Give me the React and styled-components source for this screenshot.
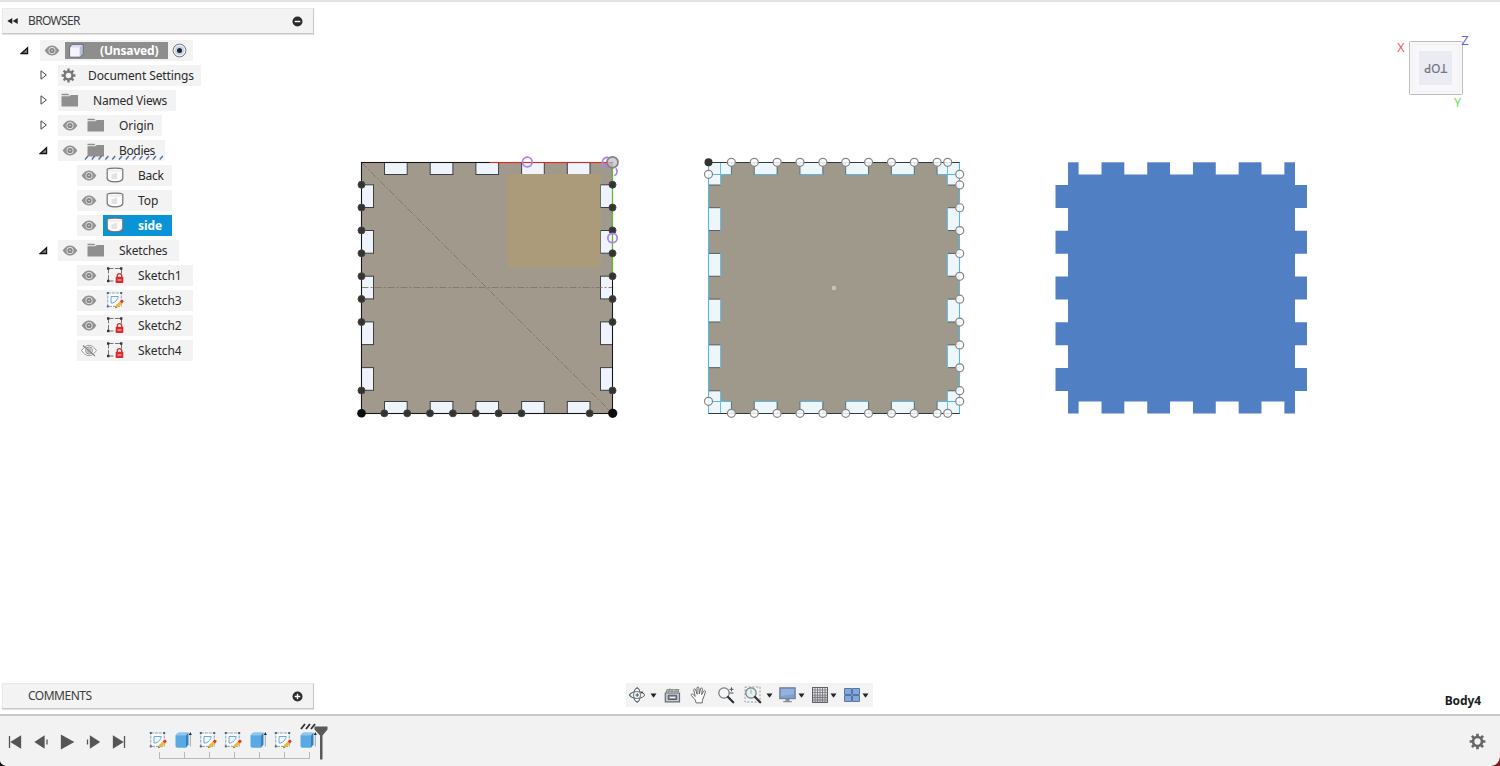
import React from "react";
import styled, { createGlobalStyle, css } from "styled-components";

const Global = createGlobalStyle`
  * { box-sizing: border-box; }
  html, body { margin: 0; padding: 0; overflow: hidden; background: #fff; }
  body { font-family: "Noto Sans", "Open Sans", sans-serif; color: #2b2b2b; }
  svg { display: block; flex: none; }
`;

/* ---------- layout ---------- */
const Shell = styled.div`
  width: 1500px;
  height: 766px;
  display: flex;
  flex-direction: column;
`;
const Workspace = styled.main`
  flex: 1;
  display: grid;
  border-top: 2px solid #e3e3e6;
`;
const Scene = styled.svg`
  grid-area: 1 / 1;
`;
const Overlay = styled.div`
  grid-area: 1 / 1;
  z-index: 1;
  display: flex;
  flex-direction: column;
  justify-content: space-between;
`;
const TopArea = styled.div`
  display: flex;
  justify-content: space-between;
  padding: 6px 26px 0 2px;
`;
const BottomArea = styled.div`
  display: flex;
  align-items: flex-start;
  height: 31px;
  padding-left: 2px;
`;

/* ---------- palettes ---------- */
const Palette = styled.section`
  width: 312px;
`;
const PaletteHeader = styled.header`
  display: flex;
  align-items: center;
  width: 312px;
  height: 26px;
  padding: 0 10px 0 ${(p) => (p.$arrow ? 4 : 25)}px;
  background: #f3f3f3;
  border: 1px solid #e9e9e9;
  border-right-color: #c9c9c9;
  border-bottom-color: #c6c6c6;
  box-shadow: 0 1px 1px #e4e4e4;
`;
const PaletteTitle = styled.h2`
  margin: 0 auto 0 ${(p) => (p.$arrow ? 10 : 0)}px;
  font-size: 12px;
  font-weight: 400;
  line-height: 20px;
  letter-spacing: ${(p) => p.$track || 0}px;
  color: #3c3c3c;
`;
const Tree = styled.ul`
  list-style: none;
  margin: 6px 0 0;
  padding: 0;
  display: flex;
  flex-direction: column;
  gap: 5px;
`;
const Row = styled.li`
  display: flex;
  align-items: center;
  height: 20px;
  padding-left: ${(p) => p.$indent}px;
`;
const Twisty = styled.span`
  width: ${(p) => p.$w}px;
  display: flex;
`;
const Cell = styled.div`
  position: relative;
  display: flex;
  align-items: center;
  width: ${(p) => p.$w}px;
  height: 21px;
  padding-left: ${(p) => p.$pad ?? 4}px;
  background: #f3f3f3;
`;
const Chip = styled.div`
  display: flex;
  align-items: center;
  height: 20px;
  margin-left: 6px;
  padding-left: 3px;
  ${(p) =>
    p.$tone === "root" &&
    css`
      width: 103px;
      height: 17px;
      margin-left: 5px;
      background: #8e8e8e;
      color: #fff;
      font-weight: 700;
    `}
  ${(p) =>
    p.$tone === "selected" &&
    css`
      width: 69px;
      height: 21px;
      background: #0a94d8;
      color: #fff;
      font-weight: 700;
    `}
`;
const Label = styled.span`
  margin-left: ${(p) => p.$ml ?? 15}px;
  padding-top: 1px;
  font-size: 12px;
  line-height: 18px;
  letter-spacing: ${(p) => p.$track ?? -0.08}px;
  white-space: nowrap;
`;
const RadioSlot = styled.span`
  margin-left: 4px;
`;
const Hatch = styled.svg`
  position: absolute;
  left: 26px;
  bottom: 1px;
`;

/* ---------- view cube ---------- */
const CubeWrap = styled.svg`
  margin-top: 22px;
`;

/* ---------- navigation bar ---------- */
const NavBar = styled.nav`
  display: flex;
  align-items: center;
  width: 247px;
  height: 24px;
  margin-left: 312px;
  padding-left: 2px;
  background: #f3f3f3;
`;
const NavItem = styled.span`
  display: flex;
  align-items: center;
  gap: ${(p) => p.$gap ?? 4}px;
  width: ${(p) => p.$w}px;
`;
const Status = styled.strong`
  margin: 9px 0 0 auto;
  padding-right: 19px;
  font-size: 12px;
  line-height: 18px;
  letter-spacing: -0.1px;
  color: #1d1d1d;
`;

/* ---------- timeline ---------- */
const Timeline = styled.footer`
  position: relative;
  display: flex;
  height: 52px;
  border-top: 2px solid #c9c9c9;
  background: #f2f2f2;
`;
const Player = styled.div`
  display: flex;
  align-items: center;
  height: 52px;
  padding-left: 7px;
`;
const PlayBtn = styled.span`
  width: 26px;
  display: flex;
`;
const Features = styled.div`
  display: flex;
  padding: 15px 0 0 12px;
`;
const Feature = styled.div`
  width: 25px;
  height: 28px;
  display: flex;
  flex-direction: column;
  justify-content: space-between;
`;
const Tick = styled.i`
  height: 7px;
  margin-left: 10px;
  margin-right: -10px;
  border-left: 1px solid #b8b8b8;
  border-bottom: ${(p) => (p.$last ? 0 : 1)}px solid #b8b8b8;
`;
const Marker = styled.svg`
  position: absolute;
  left: 298px;
  top: 6px;
`;
const GearBox = styled.span`
  margin: 17px 14px 0 auto;
`;
const Corner = styled.svg`
  position: absolute;
  bottom: 0;
  ${(p) => p.$side}: 0;
`;

/* ---------- icons ---------- */
const Eye = ({ off }) => (
  <svg width="16" height="13" viewBox="0 0 16 13">
    <path d="M.6 6.500C3.200 2.600 5.600 1.400 8 1.400s4.800 1.200 7.400 5.100C12.800 10.400 10.400 11.600 8 11.600S3.200 10.400.6 6.500Z"
      fill={off ? "#f8f8f8" : "#929292"} stroke={off ? "#888" : "none"} strokeWidth=".9" />
    <circle cx="8" cy="6.500" r="3.500" fill={off ? "none" : "#e4e4e4"} stroke={off ? "#888" : "none"} strokeWidth=".9" />
    <circle cx="8" cy="6.500" r="2.600" fill={off ? "#bbb" : "#858585"} />
    {!off && <circle cx="8" cy="6.500" r=".8" fill="#ddd" />}
    {off && <path d="M2 1.500 14 12" stroke="#888" strokeWidth="1.100" />}
  </svg>
);
const Open = () => (
  <svg width="9" height="9" viewBox="0 0 9 9">
    <path d="M7.600 1.500V7.600H1Z" fill="#555" stroke="#111" strokeWidth="1.200" />
    <path d="M6.700 4v2.500H4.200Z" fill="#999" />
  </svg>
);
const Closed = () => (
  <svg width="9" height="10" viewBox="0 0 9 10">
    <path d="M2 .8v8.400L7.400 5Z" fill="#fff" stroke="#444" strokeWidth="1" />
  </svg>
);
const Folder = () => (
  <svg width="18" height="14" viewBox="0 0 18 14">
    <path d="M.5 .7h6.800l1.200 1.500H.5ZM.5 3.200h7.500l2-1.300h7V13.400H.5Z" fill="#8f8f8f" />
  </svg>
);
const Gear = ({ size = 15, color = "#777" }) => (
  <svg width={size} height={size} viewBox="0 0 16 16">
    <g stroke={color} strokeWidth="2.500">
      <path d="M8 .6v3M8 12.400v3M.6 8h3M12.400 8h3M2.750 2.750l2.200 2.200M11.050 11.050l2.200 2.200M2.750 13.250l2.200-2.200M11.050 4.950l2.200-2.200" />
    </g>
    <circle cx="8" cy="8" r="4.200" fill="none" stroke={color} strokeWidth="2.500" />
  </svg>
);
const Root = () => (
  <svg width="17" height="15" viewBox="0 0 17 15">
    <path d="M1.800 4.200 4 1.300H15V11l-2.400 2.900H1.800Z" fill="#d8dcef" stroke="#5d5d68" strokeWidth=".9" />
    <path d="M2.200 4.500h9.500v9H2.200Z" fill="#f4f4fb" />
    <path d="M11.800 4.500 14.500 2v9l-2.700 2.500Z" fill="#b5bddc" />
  </svg>
);
const Radio = () => (
  <svg width="15" height="15" viewBox="0 0 15 15">
    <circle cx="7.500" cy="7.500" r="6.400" fill="#eef1f5" stroke="#777" />
    <circle cx="7.500" cy="7.500" r="4.600" fill="#c3d2e4" />
    <circle cx="7.500" cy="7.500" r="2.500" fill="#1c2436" />
  </svg>
);
const Body = () => (
  <svg width="18" height="16" viewBox="0 0 18 16">
    <path d="M1.200 2.300C3.500.7 14.500.7 16.800 2.300V11.500C16.300 13.400 14.500 14.800 9 14.800S1.700 13.400 1.200 11.500Z" fill="#fbfbfb" stroke="#747474" strokeWidth="1.200" />
    <path d="M1.800 3c3 1.400 11.400 1.400 14.400 0" fill="none" stroke="#dcdcdc" strokeWidth=".8" />
    <path d="M5.500 7.500 11 5.500v6.500H5.500Z" fill="#e3e3e3" />
  </svg>
);
const SketchLocked = () => (
  <svg width="18" height="18" viewBox="0 0 18 18">
    <path d="M2.500 2.500h13M2.500 2.500v12.500M15.500 2.500v7M2.500 15h7" fill="none" stroke="#777" strokeWidth="1" strokeDasharray="5 1.500" />
    <g fill="#333">
      <rect x="1" y="1.300" width="2.400" height="2.400" />
      <rect x="14" y="1.300" width="2.400" height="2.400" />
      <rect x="1" y="13.800" width="2.400" height="2.400" />
    </g>
    <path d="M11.300 11V9.800a2.200 2.200 0 0 1 4.400 0V11" fill="none" stroke="#cf3434" strokeWidth="1.300" />
    <rect x="9.700" y="10.800" width="7.600" height="6.200" rx=".7" fill="#d32f2f" />
    <path d="M11.500 14h4" stroke="#f3a9a9" strokeWidth="1.200" />
  </svg>
);
const SketchEdit = () => (
  <svg width="18" height="18" viewBox="0 0 18 18">
    <rect x="1.800" y="2" width="13.400" height="13.400" fill="#fbfcff" stroke="#8199ad" strokeWidth=".9" strokeDasharray="3 1" />
    <g fill="#4e6678">
      <rect x=".8" y="1" width="2" height="2" />
      <rect x="14.200" y="1" width="2" height="2" />
      <rect x=".8" y="14.400" width="2" height="2" />
    </g>
    <path d="M5 5.500h7.200c-.2 2.700-2.300 5.500-5.500 6.500H5Z" fill="#f2f8fd" stroke="#6ea6d4" strokeWidth="1" />
    <path d="M9.200 17.200 10 14l4-3.800 2.200 2.200L12 16.300Z" fill="#f2b736" />
    <path d="m13.800 10.200 1.400-1.300q1-.5 1.900.4t.2 1.800l-1.400 1.300Z" fill="#e0382f" />
    <path d="m9.200 17.200.5-1.700 1.200 1.100Z" fill="#725220" />
  </svg>
);
const Extrude = () => (
  <svg width="18" height="18" viewBox="0 0 18 18">
    <path d="M1.500 4.500Q2.500 1.500 5 1.300H14L12 4.500Z" fill="#8fc6ee" />
    <path d="M1.500 4.300H12V16.800H3.500Q1.500 16.800 1.500 15Z" fill="#59a9e3" />
    <path d="M12 4.300 14.500 1.300V13.500L12 16.800Z" fill="#3580be" />
    <path d="M16.300 3.500v12" stroke="#9a9a9a" strokeWidth=".9" />
    <path d="m14.800 4 1.500-3 1.500 3Z" fill="#222" />
  </svg>
);
const Knob = ({ plus }) => (
  <svg width="11" height="11" viewBox="0 0 11 11">
    <circle cx="5.500" cy="5.500" r="5" fill="#2c2c2c" />
    <path d={plus ? "M2.700 5.500h5.600M5.500 2.700v5.600" : "M2.700 5.500h5.600"} stroke="#fff" strokeWidth="1.400" />
  </svg>
);
const Collapse = () => (
  <svg width="11" height="8" viewBox="0 0 11 8">
    <path d="M5.300 1v6L.3 4ZM10.700 1v6l-5-3Z" fill="#222" />
  </svg>
);
const Caret = () => (
  <svg width="7" height="5" viewBox="0 0 7 5"><path d="M.5.5h6L3.500 4.700Z" fill="#222" /></svg>
);

const Orbit = () => (
  <svg width="18" height="18" viewBox="0 0 18 18" fill="none" stroke="#5c666b" strokeWidth="1">
    <ellipse cx="9" cy="9" rx="7.500" ry="3.300" />
    <ellipse cx="9" cy="9" rx="3.300" ry="7" />
    <path d="m7.300 3.500 2-2 2 2M7.300 14.500l2 2 2-2M3.500 7 1.500 9l2 2" />
    <circle cx="9" cy="9" r="2.700" fill="#f8f8f8" stroke="none" />
    <path d="M7.500 9h3.400M9.200 7.300v3.400" stroke="#2b5a6c" />
    <circle cx="14" cy="6.500" r="1" fill="#333" stroke="none" />
  </svg>
);
const LookAt = () => (
  <svg width="17" height="16" viewBox="0 0 17 16">
    <path d="M1.300 6h14.200v8.800H1.300Z" fill="#c9ccd3" stroke="#666b74" strokeWidth="1.200" />
    <path d="M2 5.500 3 2.500M4.500 5.500 6 1.500M8 5.500V2.800M10.500 5.500 13 2.200M13.500 5.500l1.500-3M3 2.700h12M2 4.200h13" stroke="#777" strokeWidth=".9" />
    <path d="M4.200 8.300h8.500v4.200H4.200Z" fill="#8f96a2" stroke="#555b66" />
    <path d="M6 10.400h5" stroke="#fff" />
  </svg>
);
const Hand = () => (
  <svg width="18" height="18" viewBox="0 0 24 24" fill="#fff" stroke="#666" strokeWidth="1.300" strokeLinejoin="round" strokeLinecap="round">
    <path d="M8 22 7 18.500 1.800 12.700c-1-1.700 1-2.700 2.400-1.400L7 14 5 5.500c-.3-2 2-2.300 2.500-.6L9.500 11 9.300 2.800c0-2 2.400-2 2.600 0l.5 7.900 1.700-7c.5-1.800 2.700-1.300 2.400.6l-1 7.200 2.700-4.700c1-1.500 3-.6 2.300 1.200L17.800 16l-1.300 3V22Z" />
  </svg>
);
const Zoom = ({ fit }) => (
  <svg width="18" height="18" viewBox="0 0 18 18">
    {fit && <rect x="1" y="1" width="15" height="15" fill="none" stroke="#8d8d8d" strokeWidth=".9" strokeDasharray="2 1.700" />}
    <circle cx="7" cy="7" r="5.200" fill={fit ? "#e3f0ef" : "#f4f6f7"} stroke="#747b80" strokeWidth="1.200" />
    <path d="m11 11 5.200 5.200" stroke="#333" strokeWidth="2.300" strokeLinecap="round" />
    {fit ? <path d="M7 3.800v4" stroke="#8cb6b3" /> : <path d="M12.500 3.300h4M14.500 1.300v4M12.500 7h4" stroke="#444" strokeWidth=".9" />}
  </svg>
);
const Monitor = () => (
  <svg width="17" height="16" viewBox="0 0 17 16">
    <rect x=".8" y=".8" width="15.400" height="10.900" fill="#7e9fcf" stroke="#66758d" />
    <path d="M2 2h13v5L2 9Z" fill="#94b2dc" />
    <path d="M6.500 12h4v2h2.300v1.300H4.200V14h2.300Z" fill="#888e99" />
  </svg>
);
const GridIcon = () => (
  <svg width="16" height="16" viewBox="0 0 16 16">
    <rect x=".5" y=".5" width="15" height="15" fill="#e5e5ea" stroke="#606067" />
    <path d="M3 1v14M5.500 1v14M8 1v14M10.500 1v14M13 1v14M1 3h14M1 5.500h14M1 8h14M1 10.500h14M1 13h14" stroke="#727279" strokeWidth=".8" />
    <path d="M1 8h14v7H1Z" fill="#666" opacity=".2" />
  </svg>
);
const Panes = () => (
  <svg width="16" height="14" viewBox="0 0 16 14">
    <path d="M.5.5h7v6h-7ZM8.500.5h7v6h-7ZM.5 7.500h7v6h-7ZM8.500 7.500h7v6h-7Z" fill="#83a8db" stroke="#5676a5" strokeWidth="1" />
  </svg>
);

/* ---------- scene drawing ---------- */
const seq = (start, n, step = 22.86) => Array.from({ length: n }, (_, i) => start + i * step);

const Panel1 = () => {
  const dots = [184.700, 207.500, 230.400, 253.300, 276.200, 299, 322, 390.500];
  const bottom = [384.300, 407.200, 430, 452.900, 475.800, 498.600, 521.500, 589.700];
  return (
    <g>
      <rect x="361" y="162" width="252" height="252" fill="#a19a8c" />
      <g fill="#eef3fc" stroke="#394047" strokeWidth="1">
        {seq(384.500, 5, 45.700).map((x) => (
          <React.Fragment key={x}>
            <rect x={x} y="162.500" width="22.700" height="12" />
            <rect x={x} y="401.500" width="22.700" height="12" />
          </React.Fragment>
        ))}
        {seq(184.800, 5, 45.700).map((y) => (
          <React.Fragment key={y}>
            <rect x="361.500" y={y} width="12" height="22.700" />
            <rect x="600.500" y={y} width="12" height="22.700" />
          </React.Fragment>
        ))}
      </g>
      <rect x="508" y="174" width="92.500" height="93.500" fill="#ab9b7b" />
      <path d="M361.500 162.500 612.500 413.500" stroke="#7d766a" strokeWidth=".9" strokeDasharray="7 2 2 2" />
      <path d="M361.500 287.500H612.500" stroke="#7d776c" strokeWidth=".9" strokeDasharray="7 2 2 2" />
      <rect x="361.500" y="162.500" width="251" height="251" fill="none" stroke="#15171b" strokeWidth="1.100" />
      <path d="M490 162.500H612" stroke="#e8261f" strokeWidth="1.100" />
      <path d="M612.500 163V276" stroke="#5cc02a" strokeWidth="1.100" />
      <g fill="#333" stroke="#4a4844" strokeWidth="1">
        {dots.map((y) => (
          <React.Fragment key={y}>
            <circle cx="361.500" cy={y} r="3.500" />
            <circle cx="612.500" cy={y} r="3.500" />
          </React.Fragment>
        ))}
        {bottom.map((x) => <circle key={x} cx={x} cy="413.300" r="3.500" />)}
      </g>
      <circle cx="361.500" cy="413.300" r="4.300" fill="#0c0c0c" />
      <circle cx="612.700" cy="413.300" r="4.600" fill="#0c0c0c" />
      <g fill="none" stroke="#ad80e3" strokeWidth="1.700">
        <circle cx="527.300" cy="162" r="4.800" />
        <path d="M608.500 166.500a4.700 4.700 0 1 1 0-9" />
        <path d="M615.800 168.300a4.500 4.500 0 0 1-1.600 7.400" />
        <circle cx="612.500" cy="238" r="4.700" />
      </g>
      <circle cx="612.500" cy="162.300" r="5.500" fill="#c6bec9" fillOpacity=".75" stroke="#857e89" strokeWidth="1.700" />
    </g>
  );
};

const L = 708.500, R = 959.500, T = 162.500, B = 413.500;
const Panel2 = () => {
  const xs = [...seq(731.400, 10), 947.700];
  const rightY = [174.300, ...seq(184.900, 10), 401.300];
  return (
    <g>
      <rect x="708" y="162" width="252" height="252" fill="#9f998b" />
      <g fill="#edf6fb">
        {[[L, 23], ...seq(754.200, 4, 45.720).map((x) => [x, 22.800]), [937, 22.500]].map(([x, w]) => (
          <React.Fragment key={x}>
            <rect x={x} y={T} width={w} height="12" />
            <rect x={x} y="401.500" width={w} height="12" />
          </React.Fragment>
        ))}
        {[[T, 22.500], ...seq(207.700, 4, 45.720).map((y) => [y, 22.800]), [390.800, 22.700]].map(([y, h]) => (
          <React.Fragment key={y}>
            <rect x={L} y={y} width="12" height={h} />
            <rect x="947.500" y={y} width="12" height={h} />
            <path d={`M${L} ${y}h12M${L} ${y + h}h12M947.500 ${y}h12M947.500 ${y + h}h12`} stroke="#4a555a" strokeWidth=".9" />
          </React.Fragment>
        ))}
      </g>
      {[[L, 23], ...seq(754.200, 4, 45.720).map((x) => [x, 22.800]), [937, 22.500]].map(([x, w]) => (
        <path key={x} d={`M${x} 174.500h${w}M${x} 401.500h${w}`} stroke="#5fb2d8" />
      ))}
      {[[T, 22.500], ...seq(207.700, 4, 45.720).map((y) => [y, 22.800]), [390.800, 22.700]].map(([y, h]) => (
        <path key={y} d={`M720.500 ${y}v${h}M947.500 ${y}v${h}`} stroke="#68bfe6" />
      ))}
      <path
        d={seq(731.400, 10).map((x) => `M${x} 162.500v12M${x} 401.500v12`).join("")}
        stroke="#4d6570" strokeWidth=".9"
      />
      <path d={`M${L} ${T}V${B}M${R} ${T}V${B}`} stroke="#58b5e0" strokeWidth="1.100" />
      <path d={`M${L} ${T}H${R}M${L} ${B}H${R}`} stroke="#33383d" strokeWidth="1.200" />
      <g fill="#fff" fillOpacity=".85" stroke="#858585" strokeWidth="1.200">
        {xs.map((x) => (
          <React.Fragment key={x}>
            <circle cx={x} cy="162.300" r="4" />
            <circle cx={x} cy="413.300" r="4" />
          </React.Fragment>
        ))}
        {rightY.map((y) => <circle key={y} cx="959.700" cy={y} r="4" />)}
        <circle cx="708.500" cy="174.300" r="4" />
        <circle cx="708.500" cy="401.300" r="4" />
      </g>
      <circle cx="708.500" cy="162.300" r="4" fill="#333" />
      <circle cx="834" cy="288" r="3.200" fill="#c5c0b7" stroke="#8d887d" />
    </g>
  );
};

const Panel3 = () => (
  <g>
    <rect x="1068" y="162.300" width="227" height="251.200" fill="#507fc4" />
    <g fill="#507fc4">
      {seq(185, 5, 45.750).map((y) => <rect key={y} x="1055.500" y={y} width="251.500" height="23" />)}
    </g>
    <g fill="#fff">
      {seq(1078.600, 5, 45.720).map((x) => (
        <React.Fragment key={x}>
          <rect x={x} y="160" width="22.900" height="14.500" />
          <rect x={x} y="401.500" width="22.900" height="14" />
        </React.Fragment>
      ))}
    </g>
  </g>
);

/* ---------- tree data ---------- */
const ICONS = { folder: Folder, body: Body, locked: SketchLocked, edit: SketchEdit };
const ROWS = [
  { label: "Origin", level: 1, w: 104, icon: "folder", closed: true },
  { label: "Bodies", level: 1, w: 107, icon: "folder", hatch: true, track: -0.35 },
  { label: "Back", level: 2, w: 95, icon: "body", track: -0.3 },
  { label: "Top", level: 2, w: 95, icon: "body" },
  { label: "side", level: 2, w: 95, icon: "body", selected: true },
  { label: "Sketches", level: 1, w: 121, icon: "folder", track: -0.18 },
  { label: "Sketch1", level: 2, w: 116, icon: "locked" },
  { label: "Sketch3", level: 2, w: 116, icon: "edit" },
  { label: "Sketch2", level: 2, w: 116, icon: "locked" },
  { label: "Sketch4", level: 2, w: 116, icon: "locked", off: true },
];

const TreeRow = ({ label, level, w, icon, closed, hatch, selected, off, track }) => {
  const Icon = ICONS[icon];
  return (
    <Row $indent={level === 1 ? 37 : 75}>
      {level === 1 && <Twisty $w={19}>{closed ? <Closed /> : <Open />}</Twisty>}
      <Cell $w={w}>
        <Eye off={off} />
        <Chip $tone={selected ? "selected" : undefined}>
          <Icon />
          <Label $ml={14} $track={track}>{label}</Label>
        </Chip>
        {hatch && (
          <Hatch width="80" height="5" viewBox="0 0 80 5">
            <path d={seq(1, 12, 6.800).map((x) => `M${x} 4.500l3-3.500`).join("")} stroke="#56719b" strokeWidth="1.400" />
          </Hatch>
        )}
      </Cell>
    </Row>
  );
};

const PLAYER = [
  "M2.500 2v12M13.500 2.500v11L4.500 8Z",
  "M11 2.500v11L2.500 8ZM14 5.500v5",
  "M2.500 1.500v13L14 8Z",
  "M5.500 2.500v11L14 8ZM2.500 5.500v5",
  "M13.500 2v12M2.500 2.500v11L11.500 8Z",
];
const FEATURES = ["s", "e", "s", "s", "e", "s", "e"];

export default function App() {
  return (
    <Shell>
      <Global />
      <Workspace>
        <Scene width="1500" height="712" viewBox="0 2 1500 712">
          <Panel1 />
          <Panel2 />
          <Panel3 />
        </Scene>
        <Overlay>
          <TopArea>
            <Palette>
              <PaletteHeader $arrow>
                <Collapse />
                <PaletteTitle $arrow $track={-0.65}>BROWSER</PaletteTitle>
                <Knob />
              </PaletteHeader>
              <Tree>
                <Row $indent={18}>
                  <Twisty $w={20}><Open /></Twisty>
                  <Cell $w={153}>
                    <Eye />
                    <Chip $tone="root">
                      <Root />
                      <Label $ml={15} $track={-0.15}>(Unsaved)</Label>
                    </Chip>
                    <RadioSlot><Radio /></RadioSlot>
                  </Cell>
                </Row>
                <Row $indent={37}>
                  <Twisty $w={19}><Closed /></Twisty>
                  <Cell $w={143} $pad={3}>
                    <Gear />
                    <Label $ml={12} $track={-0.1}>Document Settings</Label>
                  </Cell>
                </Row>
                <Row $indent={37}>
                  <Twisty $w={19}><Closed /></Twisty>
                  <Cell $w={118} $pad={3}>
                    <Folder />
                    <Label $ml={14} $track={-0.22}>Named Views</Label>
                  </Cell>
                </Row>
                {ROWS.map((r) => <TreeRow key={r.label} {...r} />)}
              </Tree>
            </Palette>
            <CubeWrap width="84" height="84" viewBox="1390 30 84 84">
              <rect x="1409.500" y="41.500" width="53" height="53" rx="1" fill="#f8f8fa" stroke="#bdbdbf" />
              <rect x="1412.500" y="44.500" width="47" height="47" fill="#f8f8fa" stroke="#efeff1" />
              <rect x="1419" y="51" width="33" height="34" fill="#ebebf3" />
              <g fontFamily="Noto Sans, sans-serif" textAnchor="middle">
                <text x="1435.500" y="73" fontSize="12" fontWeight="500" fill="#77777e" transform="rotate(180 1435.500 68.500)">TOP</text>
                <text x="1401" y="51.500" fontSize="12.500" fill="#f0585c">X</text>
                <text x="1465" y="44.500" fontSize="13" fill="#5f62ee">Z</text>
                <text x="1457.500" y="107" fontSize="12.500" fill="#5fe05f">Y</text>
              </g>
            </CubeWrap>
          </TopArea>
          <BottomArea>
            <PaletteHeader>
              <PaletteTitle $track={-0.5}>COMMENTS</PaletteTitle>
              <Knob plus />
            </PaletteHeader>
            <NavBar>
              <NavItem $w={36}><Orbit /><Caret /></NavItem>
              <NavItem $w={26}><LookAt /></NavItem>
              <NavItem $w={27}><Hand /></NavItem>
              <NavItem $w={27}><Zoom /></NavItem>
              <NavItem $w={35}><Zoom fit /><Caret /></NavItem>
              <NavItem $w={33} $gap={2}><Monitor /><Caret /></NavItem>
              <NavItem $w={32} $gap={2}><GridIcon /><Caret /></NavItem>
              <NavItem $w={28} $gap={2}><Panes /><Caret /></NavItem>
            </NavBar>
            <Status>Body4</Status>
          </BottomArea>
        </Overlay>
      </Workspace>
      <Timeline>
        <Player>
          {PLAYER.map((d) => (
            <PlayBtn key={d}>
              <svg width="16" height="16" viewBox="0 0 16 16">
                <path d={d} fill="#555" stroke="#555" strokeWidth="1.300" />
              </svg>
            </PlayBtn>
          ))}
        </Player>
        <Features>
          {FEATURES.map((f, i) => (
            <Feature key={i}>
              {f === "s" ? <SketchEdit /> : <Extrude />}
              <Tick $last={i === FEATURES.length - 1} />
            </Feature>
          ))}
        </Features>
        <Marker width="32" height="40" viewBox="298 722 32 40">
          <path d="m301 729 4-5M306 729l4-5M311 729l4-5" stroke="#333" strokeWidth="1.900" />
          <path d="M314.500 726.500h13v3l-5 6v24h-2.500v-24l-5.500-6Z" fill="#595959" />
        </Marker>
        <GearBox><Gear size={17} color="#666" /></GearBox>
        <Corner $side="left" width="6" height="5"><path d="M0 0Q1 4 6 5H0Z" fill="#111" /></Corner>
        <Corner $side="right" width="9" height="9"><path d="M9 0Q8 8 0 9H9Z" fill="#7c1f1c" /></Corner>
      </Timeline>
    </Shell>
  );
}
